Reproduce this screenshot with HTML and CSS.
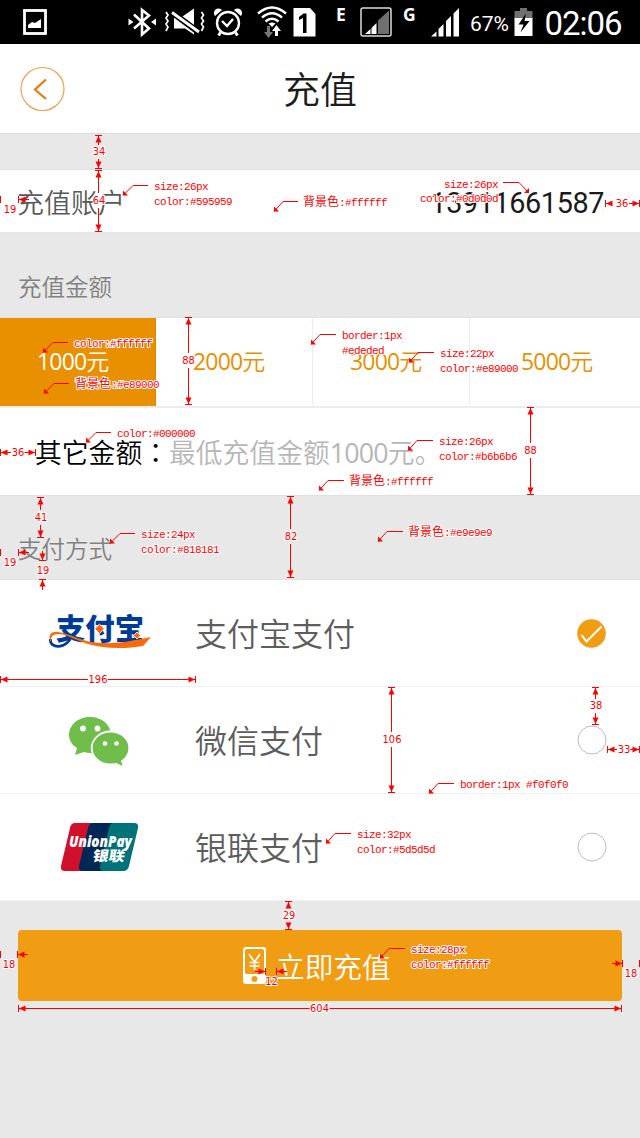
FILE: index.html
```html
<!DOCTYPE html>
<html lang="zh-CN">
<head>
<meta charset="utf-8">
<title>充值</title>
<link rel="stylesheet" href="styles.css">
</head>
<body>
<main class="screen">
  <div class="status">
    <svg width="120" height="44" viewBox="0 0 120 44"><rect x="24.500" y="10.500" width="21" height="23" fill="none" stroke="#fff" stroke-width="2.800"/><path d="M28 28v-3l4-3 3 1 6-4v9z" fill="#fff"/></svg>
    <svg width="41" height="44" viewBox="120 0 41 44"><path d="M134 14.500l15 14-7 6V10l7 5.500-15 13" fill="none" stroke="#fff" stroke-width="2.600"/><path d="M128.500 18.500l5 3.500-5 3.500zM156 18.500l-5 3.500 5 3.500z" fill="#fff"/></svg>
    <svg width="49" height="44" viewBox="161 0 49 44"><path d="M174 17.500h7l13-9v26l-9-6h-11z" fill="#fff"/><path d="M171 11.500l28 21" stroke="#000" stroke-width="6"/><path d="M172 12.500l27 19.500" stroke="#fff" stroke-width="2.800"/><path d="M166 12l2 3-2 3 2 3-2 3 2 3-2 4M201.500 12l2 3-2 3 2 3-2 3 2 3-2 4" fill="none" stroke="#fff" stroke-width="1.700"/></svg>
    <svg width="42" height="44" viewBox="210 0 42 44"><circle cx="228" cy="23" r="11" fill="none" stroke="#fff" stroke-width="2.400"/><path d="M222 21l5 5 6-7" fill="none" stroke="#fff" stroke-width="2.400"/><path d="M220.500 32.500l-2 3M235.500 32.500l2 3" stroke="#fff" stroke-width="3"/><path d="M215 16a4.500 4.500 0 0 1 7-6zM241 16a4.500 4.500 0 0 0-7-6z" fill="#fff"/></svg>
    <svg width="38" height="44" viewBox="252 0 38 44"><g fill="none" stroke="#fff" stroke-width="2.400"><path d="M258 13.500q14-12 28 0M262 17.500q10-8.500 20 0M265.500 21.500q6.500-5.500 13 0"/></g><path d="M268.500 23.500q3.500-2 7 0l-3.500 3.500z" fill="#fff"/><path d="M267 26h3v6h3l-4.500 6-4.500-6h3z" fill="#777"/><path d="M275 36h3v-5h3l-4.500-6-4.500 6h3z" fill="#fff"/></svg>
    <svg width="40" height="44" viewBox="290 0 40 44"><path d="M293.500 8h16.500l5.500 6v22.500h-22z" fill="#fff"/><path d="M299 17l4.500-3.500h3V33h-3.500V18l-4 2z" fill="#000"/></svg>
    <svg width="24" height="44" viewBox="330 0 24 44"><text x="336" y="20.500" class="net">E</text></svg>
    <svg width="44" height="44" viewBox="354 0 44 44"><rect x="361" y="8" width="30" height="28" rx="2" fill="none" stroke="#ddd" stroke-width="1.500"/><path d="M365 34l5.500-5v5zM371.500 34v-6l5-5v11z" fill="#fff"/><path d="M378 34V20.500L389 10.500V34z" fill="#707070"/></svg>
    <svg width="26" height="44" viewBox="398 0 26 44"><text x="403" y="20.500" class="net">G</text></svg>
    <svg width="42" height="44" viewBox="424 0 42 44"><path d="M431 36.500l5.500-5v5zM438.500 36.500V29l5-5v12.500zM446 36.500V21l5-5v20.500zM453.500 36.500V13.500l5.500-5.500v28.500z" fill="#fff"/></svg>
    <svg width="46" height="44" viewBox="466 0 46 44"><text x="470" y="30.500" class="pct" textLength="39">67%</text></svg>
    <svg width="28" height="44" viewBox="512 0 28 44"><path d="M514.500 19v-8h5.500V8h7v3h5.500v8z" fill="#707070"/><path d="M514.500 18h18v18h-18z" fill="#fff"/><path d="M526 13.500l-7.500 11h5l-3 8 9-11.500h-5z" fill="#000"/></svg>
    <svg width="100" height="44" viewBox="540 0 100 44"><text x="544.500" y="34.500" class="clock" textLength="78">02:06</text></svg>
  </div>

  <header class="header">
    <svg class="back" width="46" height="46" viewBox="0 0 46 46"><circle cx="23.500" cy="23" r="21.500" fill="none" stroke="#f0a050" stroke-width="1.200"/><path d="M27 13.500L16 23.500l11 9.500" fill="none" stroke="#e97b10" stroke-width="2.300"/></svg>
    <h1 class="title">充值</h1>
  </header>

  <section class="account">
    <span class="account-label">充值账户</span>
    <span class="phone">13911661587</span>
  </section>

  <h2 class="caption caption-amount">充值金额</h2>
  <div class="amounts">
    <div class="amount selected"><span class="num">1000</span>元</div>
    <div class="amount"><span class="num">2000</span>元</div>
    <div class="amount"><span class="num">3000</span>元</div>
    <div class="amount"><span class="num">5000</span>元</div>
  </div>
  <div class="other"><span class="other-label">其它金额<span class="colon" lang="zh-TW">：</span></span><span class="placeholder">最低充值金额<span class="num">1000</span>元。</span></div>

  <h2 class="caption caption-pay">支付方式</h2>
  <div class="methods">
    <div class="method">
      <div class="logo">
        <svg width="196" height="106" viewBox="0 580 196 106"><text x="56" y="640" class="ali" textLength="88" lengthAdjust="spacingAndGlyphs">支付宝</text><path d="M99.500 624l4.800 4.800-4.800 4.800-4.800-4.800zM137 632l3.500 3.500-3.500 3.500-3.500-3.500z" fill="#fa6a0a" stroke="#fff" stroke-width=".8"/><path d="M72 635C67 650 49 649 50.500 639" fill="none" stroke="#003c96" stroke-width="2.800"/><path d="M51 643C47 634 52 631 58 632C72 634 81 642 101 643C119 644 137 640 151 637L143 646C126 649 104 649 88 644C73 639 66 634 58 634C52 634 50 638 51 643Z" fill="#fa6a0a"/></svg>
      </div>
      <span class="method-name">支付宝支付</span>
      <svg class="radio" width="30" height="30" viewBox="0 0 30 30"><circle cx="14.500" cy="15.500" r="14.300" fill="#f09d13"/><path d="M4.500 17l5 6.500L24.500 8.500" fill="none" stroke="#fff" stroke-width="2"/></svg>
    </div>
    <div class="method">
      <div class="logo">
        <svg width="196" height="106" viewBox="0 687 196 106"><path d="M90 717c12 0 21 8 21 18s-9 18-21 18q-3 0-6-1l-9 3 2-7c-5-3-8-8-8-13 0-10 9-18 21-18z" fill="#70bd4b"/><ellipse cx="110.500" cy="748" rx="18.800" ry="16.500" fill="#70bd4b" stroke="#fff" stroke-width="1.800"/><path d="M114 762l8.500 4-2-7z" fill="#70bd4b"/><g fill="#fff"><circle cx="83" cy="728.500" r="2.900"/><circle cx="97.500" cy="728.500" r="2.900"/><circle cx="105" cy="743.500" r="2.300"/><circle cx="116.500" cy="743.500" r="2.300"/></g></svg>
      </div>
      <span class="method-name">微信支付</span>
      <svg class="radio" width="30" height="30" viewBox="0 0 30 30"><circle cx="15" cy="15" r="14" fill="#fff" stroke="#bcbcbc"/></svg>
    </div>
    <div class="method">
      <div class="logo">
        <svg width="196" height="106" viewBox="0 794 196 106"><path d="M75 823h20l-12 48H65q-5 0-4-5l9-38q1-5 5-5z" fill="#d0112b"/><path d="M93 823h22l-11 48H83q-5 0-4-5l9-38q1-5 5-5z" fill="#002856"/><path d="M114 823h20q5 0 4 5l-9 38q-1 5-6 5h-19q-5 0-4-5l9-38q1-5 4-5z" fill="#00737a"/><text x="69" y="847" class="up-en" textLength="63" lengthAdjust="spacingAndGlyphs">UnionPay</text><text transform="translate(92 861) skewX(-10)" class="up-cn" textLength="32" lengthAdjust="spacingAndGlyphs">银联</text></svg>
      </div>
      <span class="method-name">银联支付</span>
      <svg class="radio" width="30" height="30" viewBox="0 0 30 30"><circle cx="15" cy="15" r="14" fill="#fff" stroke="#bcbcbc"/></svg>
    </div>
  </div>

  <button class="submit">
    <svg width="23" height="38" viewBox="0 0 23 38"><path fill-rule="evenodd" d="M3 0h17q3 0 3 3v31q0 3-3 3H3q-3 0-3-3V3q0-3 3-3zM4 2Q2 2 2 4v21q0 2 2 2h15q2 0 2-2V4q0-2-2-2zM11.500 29a3 3 0 1 0 0 6 3 3 0 0 0 0-6z" fill="#fff"/><path d="M6 7l5.500 8L17 7M11.500 14.500V23M6.500 15.500h10M6.500 19h10" fill="none" stroke="#fff" stroke-width="1.600"/></svg>
    <span class="submit-label">立即充值</span>
  </button>

  <svg class="notes" width="640" height="1138" viewBox="0 0 640 1138">
    <defs>
      <marker id="dim" markerUnits="userSpaceOnUse" markerWidth="8" markerHeight="8" refX="7" refY="4" orient="auto" overflow="visible"><path d="M.5 1L7 4 .5 7z"/><path d="M7 .5h1v7h-1z"/></marker>
      <marker id="tip" markerUnits="userSpaceOnUse" markerWidth="6" markerHeight="6" refX="0" refY="6" overflow="visible"><path d="M0 6V1L5 6z"/></marker>
      <marker id="tip-right" markerUnits="userSpaceOnUse" markerWidth="6" markerHeight="6" refX="6" refY="6" overflow="visible"><path d="M6 6V1L1 6z"/></marker>
    </defs>
    <g class="dims">
      <path d="M98.500 145V136"/><path d="M98.500 159V168"/>
      <path d="M98.500 193V171"/><path d="M98.500 208V231"/>
      <path d="M29 199.500H19"/>
      <path d="M611 203.500H606"/><path d="M629 203.500H639"/>
      <path d="M188.500 353V318"/><path d="M188.500 368V404"/>
      <path d="M11 452.500H1"/><path d="M24 452.500H35"/>
      <path d="M530.500 443V408"/><path d="M530.500 458V494"/>
      <path d="M40.500 510V498"/><path d="M40.500 525V537"/>
      <path d="M29 552.500H19"/>
      <path d="M42.500 551V560"/><path d="M42.500 590V580"/>
      <path d="M290.500 529V497"/><path d="M290.500 544V577"/>
      <path d="M88 679.500H1"/><path d="M107 679.500H195"/>
      <path d="M391.500 732V688"/><path d="M391.500 747V792"/>
      <path d="M595.500 699V688"/><path d="M595.500 713V724"/>
      <path d="M617 749.500H608"/><path d="M630 749.500H639"/>
      <path d="M288.500 908V902"/><path d="M288.500 923V929"/>
      <path d="M28 954.500H18"/><path d="M612 963.500H622"/>
      <path d="M255 971.500H265"/><path d="M287 971.500H277"/>
      <path d="M310 1008.500H19"/><path d="M329 1008.500H621"/>
    </g>
    <path class="ticks" d="M.5 196v7M.5 549v7M.5 951v7M639.500 960v7"/>
    <g class="leaders">
      <path d="M148 185.500H133L123 195.500"/><path d="M298 201.500H283L274 211.500"/>
      <path d="M68 342.500H53L43 352.500"/><path d="M69 383.500H54L44 393.500"/>
      <path d="M336 334.500H320L311 344.500"/><path d="M434 352.500H418L409 362.500"/>
      <path d="M111 432.500H96L86 442.500"/><path d="M433 440.500H417L408 450.500"/>
      <path d="M344 480.500H328L319 490.500"/><path d="M135 533.500H120L110 543.500"/>
      <path d="M403 531.500H387L378 541.500"/><path d="M454 783.500H438L429 793.500"/>
      <path d="M351 833.500H335L326 843.500"/><path d="M405 948.500H389L380 958.500"/>
    </g>
    <path class="leader-right" d="M503 182.500H519L529 193"/>
    <g class="sizes">
      <text x="99" y="155">34</text><text x="99" y="204">64</text><text x="10" y="213">19</text><text x="622" y="207">36</text>
      <text x="188.500" y="364">88</text><text x="18" y="456">36</text><text x="530.500" y="454">88</text><text x="41" y="521">41</text>
      <text x="10" y="566">19</text><text x="43" y="574">19</text><text x="291" y="540">82</text><text x="98" y="683">196</text>
      <text x="392" y="743">106</text><text x="596" y="709">38</text><text x="624" y="753">33</text><text x="289" y="919">29</text>
      <text x="9" y="968">18</text><text x="271.500" y="985">12</text><text x="319.500" y="1012">604</text><text x="631" y="977">18</text>
    </g>
    <g class="specs">
      <text x="154" y="190">size:26px</text><text x="154" y="205">color:#595959</text>
      <text x="303" y="206"><tspan class="han">背景色</tspan>:#ffffff</text>
      <text x="444" y="188">size:26px</text><text x="420" y="202">color:#0d0d0d</text>
      <text x="74" y="347">color:#ffffff</text><text x="75" y="388"><tspan class="han">背景色</tspan>:#e89000</text>
      <text x="342" y="339">border:1px</text><text x="342" y="354">#ededed</text>
      <text x="440" y="357">size:22px</text><text x="440" y="372">color:#e89000</text>
      <text x="117" y="437">color:#000000</text>
      <text x="439" y="445">size:26px</text><text x="439" y="460">color:#b6b6b6</text>
      <text x="349" y="485"><tspan class="han">背景色</tspan>:#ffffff</text>
      <text x="141" y="538">size:24px</text><text x="141" y="553">color:#818181</text>
      <text x="408" y="536"><tspan class="han">背景色</tspan>:#e9e9e9</text>
      <text x="460" y="788">border:1px #f0f0f0</text>
      <text x="357" y="838">size:32px</text><text x="357" y="853">color:#5d5d5d</text>
      <text x="411" y="953">size:28px</text><text x="411" y="968">color:#ffffff</text>
    </g>
  </svg>
</main>
</body>
</html>
```
FILE: styles.css
```css
* { box-sizing: border-box; }
body { margin: 0; }
.screen {
  position: relative;
  width: 640px;
  height: 1138px;
  overflow: hidden;
  background: #e8e8e8;
  font-family: "Noto Sans CJK SC", sans-serif;
  font-weight: 350;
}
.screen svg { display: block; flex: none; }

.status { display: flex; height: 44px; background: #000; }
.net { font: 700 17.500px "Open Sans", sans-serif; fill: #fff; }
.pct { font: 400 21px Roboto, sans-serif; fill: #fff; }
.clock { font: 400 33px Roboto, sans-serif; fill: #fff; }

.header {
  display: grid;
  grid-template-columns: 46px 1fr 46px;
  align-items: center;
  height: 90px;
  padding: 0 19px;
  background: #fff;
  border-bottom: 1px solid #dcdcdc;
}
.title { margin: 0; padding-bottom: 1px; text-align: center; font-size: 37px; font-weight: 350; line-height: 86px; color: #1c1c1c; }

.account {
  display: flex;
  justify-content: space-between;
  align-items: center;
  height: 64px;
  margin-top: 35px;
  padding: 0 36px 0 17px;
  background: #fff;
  border-top: 1px solid #e0e0e0;
  border-bottom: 1px solid #e4e4e4;
}
.account-label { padding-top: 2px; font-size: 27px; line-height: 60px; color: #595959; }
.phone { padding-top: 3px; font-family: Roboto, sans-serif; font-weight: 400; font-size: 28.800px; letter-spacing: -.4px; color: #1a1a1a; }

.caption { margin: 0; padding-left: 18px; font-size: 23.500px; font-weight: 350; color: #818181; }
.caption-amount { height: 84px; line-height: 106px; }
.caption-pay { height: 85px; line-height: 105px; border-top: 1px solid #e0e0e0; border-bottom: 1px solid #e2e2e2; }

.amounts {
  display: grid;
  grid-template-columns: 156px 157px 157px 170px;
  height: 89px;
  background: #fff;
  border-top: 1px solid #e0e0e0;
}
.amount { padding-left: 37px; font-size: 23px; line-height: 84px; color: #e89000; border-right: 1px solid #ededed; }
.amount:nth-child(4) { padding-left: 51px; border-right: 0; }
.amount.selected { color: #fff; background: #e89000; border-color: #d98600; }
.num { font-family: "Open Sans", sans-serif; font-weight: 400; letter-spacing: -.036em; }

.other { height: 89px; padding-left: 35px; background: #fff; border-top: 2px solid #ededed; font-size: 26.800px; line-height: 88px; white-space: nowrap; }
.other-label { color: #000; }
.colon { font-family: "Noto Sans CJK TC", sans-serif; font-weight: 350; }
.placeholder { color: #b6b6b6; }
.placeholder .num { letter-spacing: -.03em; }

.method {
  display: flex;
  align-items: center;
  height: 107px;
  padding-right: 33px;
  background: #fff;
  border-bottom: 1px solid #f0f0f0;
}
.logo { width: 195px; }
.method-name { flex: 1; padding-bottom: 2px; font-size: 32px; line-height: 104px; color: #5d5d5d; }
.ali { font: 900 29px "Noto Sans CJK SC", sans-serif; fill: #003c96; }
.up-en { font: italic 800 15px "Open Sans", sans-serif; fill: #fff; }
.up-cn { font: 900 14px "Noto Sans CJK SC", sans-serif; fill: #fff; }

.submit {
  display: flex;
  align-items: center;
  width: 604px;
  height: 71px;
  margin: 29px 18px 0;
  padding: 0 0 0 225px;
  gap: 10px;
  border: 0;
  border-radius: 4px;
  background: #f09d13;
  color: #fff;
  font: 350 28.700px "Noto Sans CJK SC", sans-serif;
}
.submit-label { padding-bottom: 1px; }

.notes { position: absolute; inset: 0; fill: #f00; pointer-events: none; }
.dims path { stroke: #f00; marker-end: url(#dim); }
.dims path, .ticks { shape-rendering: crispEdges; }
.ticks { stroke: #f00; }
.leaders path, .leader-right { fill: none; stroke: #f00; marker-end: url(#tip); }
.leader-right { marker-end: url(#tip-right); }
.sizes text, .specs text { fill: #f00; stroke: #fff; stroke-width: 2px; paint-order: stroke; }
.sizes text { font: 400 11px "DejaVu Sans Condensed", "DejaVu Sans", sans-serif; text-anchor: middle; }
.specs text { font: 400 11px "Liberation Mono", "Noto Sans CJK SC", monospace; letter-spacing: -.6px; white-space: pre; }
.specs .han { font: 400 12px "Noto Sans CJK SC", sans-serif; letter-spacing: 0; }
```
